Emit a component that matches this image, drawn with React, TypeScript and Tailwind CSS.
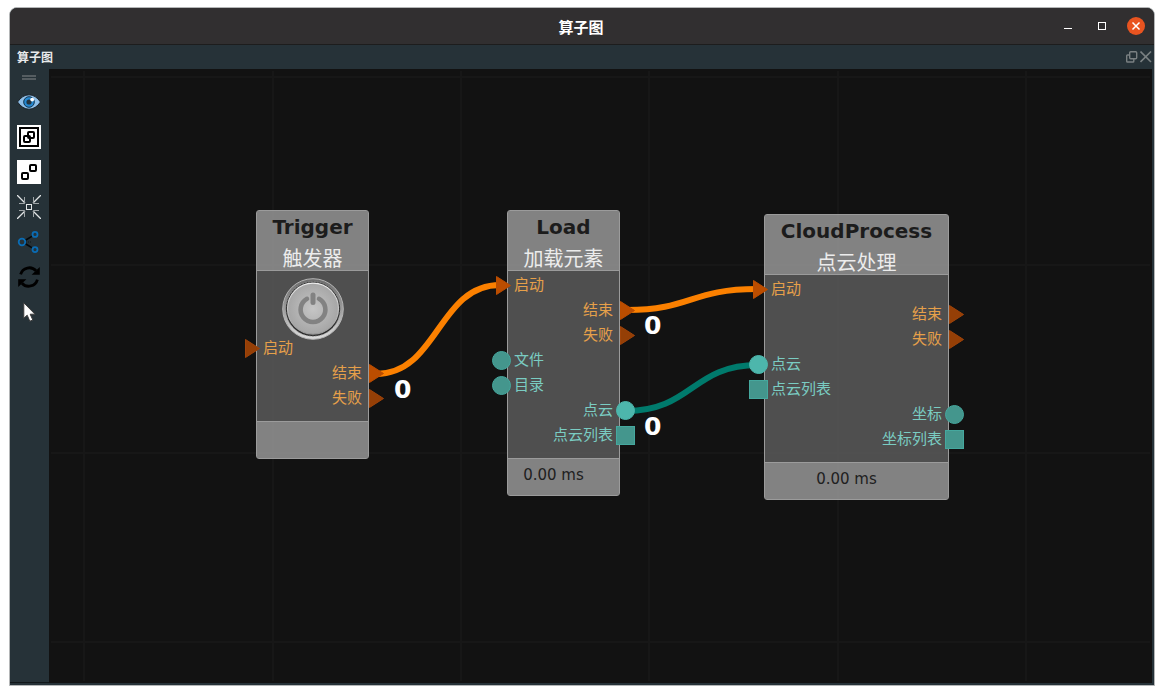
import React from 'react';

type PortKind = 'flow' | 'item' | 'list';

interface Port {
  label: string;
  kind: PortKind;
  side: 'in' | 'out';
  connected?: boolean;
}

const loadPorts: Port[] = [
  { label: '启动', kind: 'flow', side: 'in', connected: true },
  { label: '结束', kind: 'flow', side: 'out', connected: true },
  { label: '失败', kind: 'flow', side: 'out' },
  { label: '文件', kind: 'item', side: 'in' },
  { label: '目录', kind: 'item', side: 'in' },
  { label: '点云', kind: 'item', side: 'out', connected: true },
  { label: '点云列表', kind: 'list', side: 'out' },
];

const cloudPorts: Port[] = [
  { label: '启动', kind: 'flow', side: 'in', connected: true },
  { label: '结束', kind: 'flow', side: 'out' },
  { label: '失败', kind: 'flow', side: 'out' },
  { label: '点云', kind: 'item', side: 'in', connected: true },
  { label: '点云列表', kind: 'list', side: 'in' },
  { label: '坐标', kind: 'item', side: 'out' },
  { label: '坐标列表', kind: 'list', side: 'out' },
];

const triggerPorts: Port[] = [
  { label: '启动', kind: 'flow', side: 'in' },
  { label: '结束', kind: 'flow', side: 'out', connected: true },
  { label: '失败', kind: 'flow', side: 'out' },
];

const PortShape: React.FC<{ kind: PortKind; connected?: boolean }> = ({ kind, connected }) => {
  if (kind === 'flow') {
    return <path d="M4.5 .5 18.5 9.5 4.5 18.5Z" fill={connected ? '#bb4d00' : '#953f06'} stroke={connected ? '#bb4d00' : '#a0440a'} />;
  }
  const fill = connected ? '#4db6ac' : '#44968d';
  const stroke = connected ? '#4db6ac' : '#45a89e';
  return kind === 'item'
    ? <circle cx="9.5" cy="9.5" r="9" fill={fill} stroke={stroke} />
    : <rect x=".5" y=".5" width="18" height="18" fill={fill} stroke={stroke} />;
};

const PortRow: React.FC<{ port: Port }> = ({ port }) => (
  <li className={`relative flex h-[25px] items-start px-1.5 ${port.side === 'out' ? 'justify-end' : ''}`}>
    <span className={`text-[15px] leading-[22px] ${port.kind === 'flow' ? 'text-[#e6a04a]' : 'text-[#7accc2]'}`}>{port.label}</span>
    <svg
      className={`absolute top-[3px] size-[19px] ${port.side === 'in' ? '-left-4' : '-right-4'}`}
      viewBox="0 0 19 19"
    >
      <PortShape kind={port.kind} connected={port.connected} />
    </svg>
  </li>
);

interface NodeProps {
  title: string;
  subtitle: string;
  ports: Port[];
  time?: string;
  className: string;
  children?: React.ReactNode;
}

const GraphNode: React.FC<NodeProps> = ({ title, subtitle, ports, time, className, children }) => (
  <section className={`absolute rounded-[3px] border border-[#9b9b9b] ${className}`}>
    <header className="h-[60px] border-b border-[#9b9b9b] bg-[#898989]/95 text-center">
      <h2 className="font-['DejaVu_Sans',sans-serif] text-xl leading-8 font-bold text-[#1c1c1c]">{title}</h2>
      <p className="text-xl leading-[29px] text-[#ececec]">{subtitle}</p>
    </header>
    <div className="bg-[#535353]/95 pt-0.5 pb-2.5">
      {children}
      <ul>
        {ports.map((port) => (
          <PortRow key={port.label + port.side} port={port} />
        ))}
      </ul>
    </div>
    <footer className="h-[37px] border-t border-[#9b9b9b] bg-[#898989]/95 pr-5 text-center font-['DejaVu_Sans',sans-serif] text-[15px] leading-8 text-[#202020]">
      {time}
    </footer>
  </section>
);

const PowerButton: React.FC = () => (
  <button type="button" aria-label="触发" className="mx-auto mt-[5px] -mb-1 block size-[62px]">
    <svg viewBox="0 0 62 62" className="size-full">
      <defs>
        <linearGradient id="ring" x1="0" y1="0" x2="0" y2="1">
          <stop offset="0" stopColor="#6c6c6c" />
          <stop offset=".5" stopColor="#9c9c9c" />
          <stop offset="1" stopColor="#dedede" />
        </linearGradient>
        <radialGradient id="disc">
          <stop offset="0" stopColor="#c6c6c6" />
          <stop offset="1" stopColor="#a6a6a6" />
        </radialGradient>
        <linearGradient id="edge" x1="0" y1="0" x2="0" y2="1">
          <stop offset="0" stopColor="#eeeeee" />
          <stop offset="1" stopColor="#999999" />
        </linearGradient>
      </defs>
      <circle cx="31" cy="31" r="30.3" fill="url(#ring)" stroke="#b5b5b5" />
      <circle cx="31" cy="31" r="27.2" fill="#2c2c2c" />
      <circle cx="31" cy="31" r="27.2" fill="none" stroke="#8a8a8a" strokeWidth=".8" strokeDasharray="1.5 1.5" />
      <circle cx="31" cy="30.6" r="25.5" fill="url(#disc)" stroke="url(#edge)" strokeWidth="1.2" />
      <path d="M25 20.8A12.4 12.4 0 1 0 37 20.8" fill="none" stroke="#828282" strokeWidth="4.6" strokeLinecap="round" />
      <path d="M31 17V24.5" stroke="#828282" strokeWidth="5" strokeLinecap="round" />
    </svg>
  </button>
);

const EyeIcon = () => (
  <svg viewBox="0 0 24 24" className="size-6">
    <path d="M.5 12Q5.5 4.8 12 4.8T23.5 12Q18.5 19.2 12 19.2T.5 12Z" fill="#8fbfe8" stroke="#1b2228" />
    <circle cx="12" cy="12" r="5.3" fill="#2487d0" stroke="#12354f" />
    <circle cx="12" cy="12" r="2.6" fill="#25343f" />
    <circle cx="15.2" cy="9.6" r="1.9" fill="#ffffff" />
  </svg>
);

const GroupIcon = () => (
  <svg viewBox="0 0 24 24" className="size-6" fill="none" stroke="#000000" strokeWidth="2">
    <path d="M0 0H24V24H0Z" fill="#ffffff" stroke="none" />
    <rect x="3" y="3" width="18" height="18" />
    <rect x="7" y="11" width="6" height="6" rx="1" />
    <rect x="11" y="7" width="6" height="6" rx="1" />
  </svg>
);

const UngroupIcon = () => (
  <svg viewBox="0 0 24 24" className="size-6" fill="none" stroke="#000000" strokeWidth="2">
    <path d="M0 0H24V24H0Z" fill="#ffffff" stroke="none" />
    <rect x="5" y="13" width="6" height="6" rx="1" />
    <rect x="13" y="5" width="6" height="6" rx="1" />
  </svg>
);

const CollapseIcon = () => (
  <svg viewBox="0 0 24 24" className="size-6" fill="none" stroke="#e2e5e6">
    <path d="M0 0 8 8M24 0 16 8M0 24 8 16M24 24 16 16" strokeWidth="1.3" />
    <path d="M7.5 2V8.5H2M16.5 2V8.5H22M7.5 22V15.5H2M16.5 22V15.5H22" stroke="#9ea4a6" />
    <rect x="9.5" y="9.5" width="5" height="5" />
  </svg>
);

const ShareIcon = () => (
  <svg viewBox="0 0 24 24" className="size-6" fill="none">
    <path d="M8 10.5 16 5.6M8 13.5 16 18.4" stroke="#05080a" strokeWidth="1.6" />
    <path d="M9 12H14" stroke="#10171b" strokeDasharray="1 1" />
    <g stroke="#0a6cb4" strokeWidth="1.8">
      <circle cx="5" cy="12" r="3.3" />
      <circle cx="18" cy="4.4" r="2.5" />
      <circle cx="18" cy="19.6" r="2.5" />
    </g>
  </svg>
);

const SyncIcon = () => (
  <svg viewBox="0 0 24 24" className="size-6">
    <path d="M3.6 9.4C5.5 2.3 14.5.7 19 5.8M20.4 14.6C18.5 21.7 9.5 23.3 5 18.2" fill="none" stroke="#000000" strokeWidth="2.8" />
    <path d="M22.8 2V9.8H14.6ZM1.2 22V14.2H9.4Z" />
  </svg>
);

const CursorIcon = () => (
  <svg viewBox="0 0 24 24" className="size-6">
    <path d="M6.8 2.8V18.2L10.2 15.2 12.8 21.2 15.8 20 13.2 14.2H18Z" fill="#ffffff" stroke="#3c3c3c" strokeLinejoin="round" />
  </svg>
);

const tools = [
  { name: '显示', icon: <EyeIcon /> },
  { name: '编组', icon: <GroupIcon /> },
  { name: '取消编组', icon: <UngroupIcon /> },
  { name: '居中', icon: <CollapseIcon /> },
  { name: '连接', icon: <ShareIcon /> },
  { name: '刷新', icon: <SyncIcon /> },
  { name: '选择', icon: <CursorIcon /> },
];

const TitleBar: React.FC = () => (
  <header className="grid h-[37px] grid-cols-[1fr_auto_1fr] items-center border-b border-[#1d1d1d] bg-[#312f30]">
    <h1 className="col-start-2 pt-0.5 pr-0.5 text-[15px] font-bold text-white">算子图</h1>
    <div className="flex justify-end pr-px">
      <button type="button" aria-label="最小化" className="flex h-9 w-[34px] items-center justify-center">
        <span className="mt-1 h-px w-2 bg-white" />
      </button>
      <button type="button" aria-label="最大化" className="flex h-9 w-[34px] items-center justify-center">
        <span className="size-2 border border-white" />
      </button>
      <button type="button" aria-label="关闭" className="flex h-9 w-[34px] items-center justify-center">
        <svg viewBox="0 0 18 18" className="size-[18px]">
          <circle cx="9" cy="9" r="9" fill="#e95420" />
          <path d="M5.5 5.5 12.5 12.5M12.5 5.5 5.5 12.5" stroke="#ffffff" strokeWidth="1.5" />
        </svg>
      </button>
    </div>
  </header>
);

const DockHeader: React.FC = () => (
  <div className="flex h-6 items-center justify-between pr-0.5 pl-[7px]">
    <h2 className="text-xs font-bold text-[#e8eaeb]">算子图</h2>
    <div className="flex gap-0.5">
      <button type="button" aria-label="浮动">
        <svg viewBox="0 0 12 12" className="size-3" fill="none" stroke="#7a8082" strokeWidth="1.4">
          <rect x="3.7" y=".7" width="7" height="7" rx="1" />
          <path d="M3.7 4H1.5Q.7 4 .7 4.8V10.2Q.7 11 1.5 11H7Q7.8 11 7.8 10.2V8" />
        </svg>
      </button>
      <button type="button" aria-label="关闭面板">
        <svg viewBox="0 0 12 12" className="size-3" stroke="#7a8082" strokeWidth="1.6">
          <path d="M.5.5 11 11M11 .5.5 11" />
        </svg>
      </button>
    </div>
  </div>
);

const Toolbar: React.FC = () => (
  <nav className="flex w-[39px] flex-col items-center border-b border-[#11171a] pt-1.5 pr-0.5">
    <div className="flex h-[15px] w-3.5 flex-col gap-px">
      <span className="h-0.5 bg-[#555d61]" />
      <span className="h-0.5 bg-[#555d61]" />
    </div>
    <div className="flex flex-col gap-[11px]">
      {tools.map((tool) => (
        <button key={tool.name} type="button" aria-label={tool.name} className="block size-6">
          {tool.icon}
        </button>
      ))}
    </div>
  </nav>
);

const gridX = [35, 224, 412, 600, 789, 977];
const gridY = [8, 196, 384, 573];

const Canvas: React.FC = () => (
  <main className="relative flex-1 overflow-hidden bg-[#121212]">
    <div className="absolute inset-0.5">
      <svg className="size-full" stroke="#171717" strokeWidth="2">
        {gridX.map((x) => (
          <line key={x} x1={x - 2} x2={x - 2} y1="0" y2="100%" />
        ))}
        {gridY.map((y) => (
          <line key={y} x1="0" x2="100%" y1={y - 2} y2={y - 2} />
        ))}
      </svg>
    </div>
    {/* connections run between the port positions of the nodes */}
    <svg className="absolute inset-0 size-full" fill="none" strokeWidth="6">
      <path d="M327 305C389 305 389 216 451 216" stroke="#fb8000" />
      <path d="M578 241C642 241 642 220 708 220" stroke="#fb8000" />
      <path d="M577 342C643 342 643 296 709 296" stroke="#007a6c" />
    </svg>
    <GraphNode title="Trigger" subtitle="触发器" ports={triggerPorts} className="top-[141px] left-[207px] w-[113px]">
      <PowerButton />
    </GraphNode>
    <GraphNode title="Load" subtitle="加载元素" ports={loadPorts} time="0.00 ms" className="top-[141px] left-[458px] w-[113px]" />
    <GraphNode title="CloudProcess" subtitle="点云处理" ports={cloudPorts} time="0.00 ms" className="top-[145px] left-[715px] w-[185px]" />
    <span className="absolute top-[305px] left-[345px] font-['DejaVu_Sans',sans-serif] text-[25px] leading-8 font-bold text-white">0</span>
    <span className="absolute top-[241px] left-[595px] font-['DejaVu_Sans',sans-serif] text-[25px] leading-8 font-bold text-white">0</span>
    <span className="absolute top-[342px] left-[595px] font-['DejaVu_Sans',sans-serif] text-[25px] leading-8 font-bold text-white">0</span>
  </main>
);

const App: React.FC = () => {
  return (
    <div className="flex min-h-screen flex-col bg-white px-[9px] pt-[7px] pb-[9px] font-['Noto_Sans_CJK_SC',sans-serif]">
      <div className="flex flex-1 flex-col overflow-hidden rounded-t-lg border border-[#b4b6b7] bg-[#263238]">
        <TitleBar />
        <DockHeader />
        <div className="flex flex-1 pr-0.5 pb-0.5">
          <Toolbar />
          <Canvas />
        </div>
      </div>
    </div>
  );
};

export default App;
